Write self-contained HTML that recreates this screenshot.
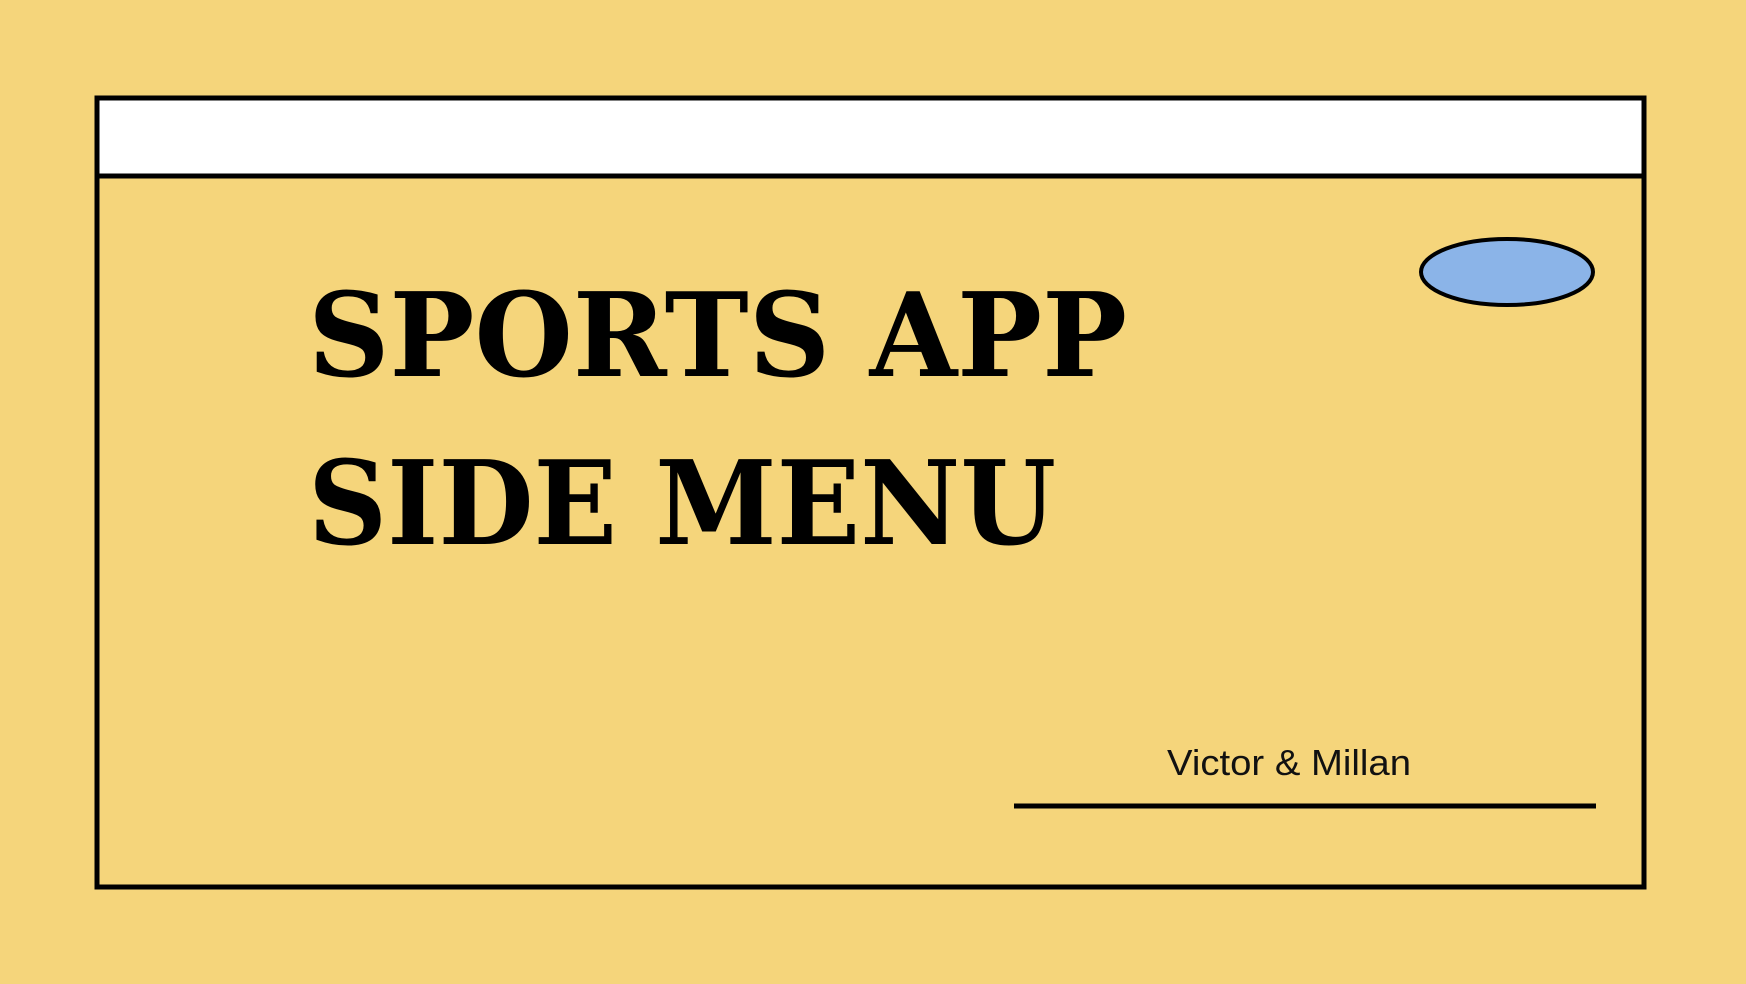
<!DOCTYPE html>
<html><head><meta charset="utf-8"><style>
html,body{margin:0;padding:0;width:1746px;height:984px;overflow:hidden;background:#f5d57b;}
svg{display:block}
</style></head><body>
<svg width="1746" height="984" viewBox="0 0 1746 984" xmlns="http://www.w3.org/2000/svg">
<rect x="0" y="0" width="1746" height="984" fill="#f5d57b"/>
<rect x="97" y="98" width="1547" height="78" fill="#ffffff"/>
<rect x="97" y="98" width="1547" height="789" fill="none" stroke="#000" stroke-width="5"/>
<line x1="97" y1="176" x2="1644" y2="176" stroke="#000" stroke-width="5"/>
<ellipse cx="1507" cy="272" rx="86" ry="33" fill="#8bb4e8" stroke="#000" stroke-width="4"/>
<text x="308" y="376" textLength="819" lengthAdjust="spacingAndGlyphs" font-family="DejaVu Serif, Liberation Serif, serif" font-weight="bold" font-size="116" fill="#000">SPORTS APP</text>
<text x="308" y="544" textLength="748" lengthAdjust="spacingAndGlyphs" font-family="DejaVu Serif, Liberation Serif, serif" font-weight="bold" font-size="116" fill="#000">SIDE MENU</text>
<text x="1167" y="775" textLength="244" lengthAdjust="spacingAndGlyphs" font-family="Liberation Sans, sans-serif" font-size="36" fill="#111">Victor &amp; Millan</text>
<line x1="1014" y1="806" x2="1596" y2="806" stroke="#000" stroke-width="5"/>
</svg>
</body></html>
